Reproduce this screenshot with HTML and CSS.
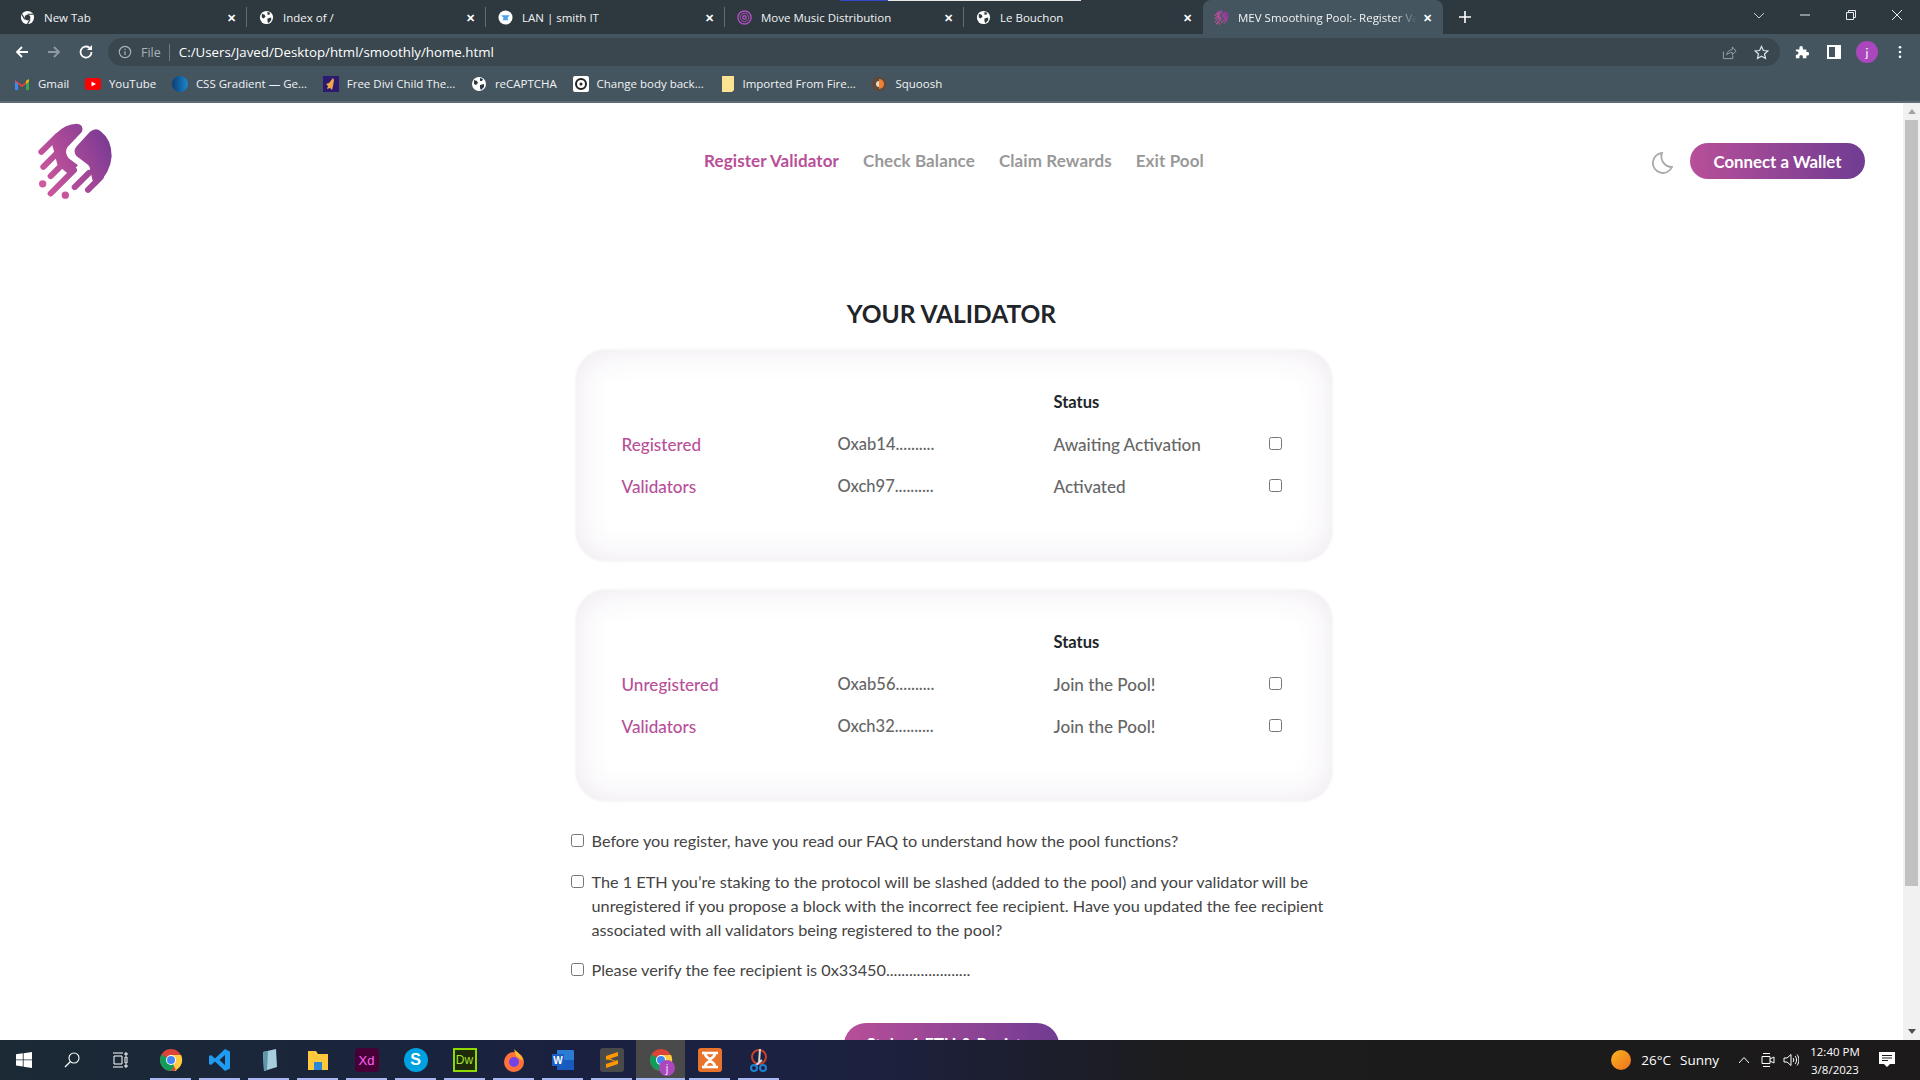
FILE: index.html
```html
<!DOCTYPE html>
<html lang="en">
  <head>
    <meta charset="UTF-8" />
    <title>MEV Smoothing Pool:- Register Validator</title>
    <link rel="stylesheet" href="styles.css">
  </head>
  <body>
    <svg class="defs" width="0" height="0">
      <defs>
        <linearGradient id="brand" gradientUnits="userSpaceOnUse" x1="130" y1="220" x2="330" y2="120">
          <stop offset="0" stop-color="#c9549b" />
          <stop offset="1" stop-color="#7a3a94" />
        </linearGradient>
        <symbol id="logo" viewBox="112 66 222 230">
          <g fill="url(#brand)">
            <path d="M228 68Q250 70 244 92L200 138Q190 155 205 172L232 192L205 220L190 208L170 190L160 150L150 115L165 98Q195 68 228 68Z" />
            <path d="M268 92Q285 78 300 90Q333 115 333 165Q330 215 285 255L275 235L268 205Q268 195 258 188L228 165Q215 150 228 135Z" />
          </g>
          <g fill="none" stroke="url(#brand)" stroke-width="18" stroke-linecap="round">
            <path d="M170 105L122 152" />
            <path d="M175 150L128 197" />
            <path d="M195 180L150 225" />
            <path d="M220 207L150 277" />
            <path d="M265 215L222 258" />
            <path d="M300 228L262 266" />
          </g>
          <circle cx="126" cy="248" r="11" fill="#d0589d" />
          <circle cx="194" cy="282" r="11" fill="#c9549b" />
        </symbol>
        <symbol id="globe" viewBox="0 0 16 16">
          <circle cx="8" cy="8" r="7" fill="#fff" />
          <path d="M3 4l3 1 1 2-2 2-2-1zM9 2l3 1-1 2-2 0zM9 9l4-1 0 3-3 3-1-2z" fill="#2e393f" />
        </symbol>
        <symbol id="chrome" viewBox="0 0 48 48">
          <circle cx="24" cy="24" r="22" fill="#db4437" />
          <path d="M24 24L5 13A22 22 0 0 0 24 46L35 27z" fill="#0f9d58" />
          <path d="M24 24L35 46L24 46A22 22 0 0 0 44 14L24 14z" fill="#ffcd40" />
          <circle cx="24" cy="24" r="10" fill="#fff" />
          <circle cx="24" cy="24" r="8" fill="#4285f4" />
        </symbol>
      </defs>
    </svg>

    <div class="tabs">
      <div class="tab"><svg class="fav" viewBox="0 0 16 16"><circle cx="8" cy="8" r="7" fill="#fff" /><circle cx="8" cy="8" r="3" fill="#2e393f" /><path d="M8 4.5h6M5 10L2 4.5M10.8 10L8 15" stroke="#2e393f" stroke-width="1.2" /></svg><span class="tab-title">New Tab</span><span class="tab-x">✕</span></div>
      <div class="tab"><svg class="fav"><use href="#globe" /></svg><span class="tab-title">Index of /</span><span class="tab-x">✕</span></div>
      <div class="tab"><svg class="fav" viewBox="0 0 16 16"><circle cx="8" cy="8" r="7.5" fill="#fff" /><path d="M3.5 5.5h9L10 8.5 11 11H5l1-2.5z" fill="#4aa3e8" /></svg><span class="tab-title">LAN | smith IT</span><span class="tab-x">✕</span></div>
      <div class="tab"><svg class="fav" viewBox="0 0 16 16" fill="none" stroke="#b04fc0"><circle cx="8" cy="8" r="7" stroke-width="1.5" /><circle cx="8" cy="8" r="4.5" /><circle cx="8" cy="8" r="1.8" stroke-width="1.5" /></svg><span class="tab-title">Move Music Distribution</span><span class="tab-x">✕</span></div>
      <div class="tab tab-last"><svg class="fav"><use href="#globe" /></svg><span class="tab-title">Le Bouchon</span><span class="tab-x">✕</span></div>
      <div class="tab tab-active"><svg class="fav"><use href="#logo" /></svg><span class="tab-title tab-fade">MEV Smoothing Pool:- Register Validator</span><span class="tab-x">✕</span></div>
      <svg class="new-tab" viewBox="0 0 12 12"><path d="M6 0v12M0 6h12" stroke="#fff" stroke-width="1.6" /></svg>
      <div class="win-controls">
        <svg viewBox="0 0 12 12"><path d="M1 4l5 5 5-5" fill="none" stroke="#c8ced2" /></svg>
        <svg viewBox="0 0 12 12"><path d="M1 6h10" stroke="#e8ebed" /></svg>
        <svg viewBox="0 0 12 12"><path d="M1.5 3.5h7v7h-7zM3.5 3.5v-2h7v7h-2" fill="none" stroke="#e8ebed" /></svg>
        <svg viewBox="0 0 12 12"><path d="M1 1l10 10M11 1L1 11" stroke="#e8ebed" /></svg>
      </div>
      <div class="load-bar"></div>
    </div>

    <div class="toolbar">
      <svg class="tool-icon" viewBox="0 0 16 16"><path d="M14 8H3M8 3L3 8l5 5" fill="none" stroke="#fff" stroke-width="1.8" /></svg>
      <svg class="tool-icon" viewBox="0 0 16 16"><path d="M2 8h11M8 3l5 5-5 5" fill="none" stroke="#8e9aa1" stroke-width="1.8" /></svg>
      <svg class="tool-icon" viewBox="0 0 16 16"><path d="M13.5 8A5.5 5.5 0 1 1 11.5 3.800" fill="none" stroke="#fff" stroke-width="1.8" /><path d="M14 1v5H9z" fill="#fff" /></svg>
      <div class="omnibox">
        <svg class="info" viewBox="0 0 16 16"><circle cx="8" cy="8" r="6.5" fill="none" stroke="#aab3b8" stroke-width="1.3" /><path d="M8 7v4.500M8 4.300v1.400" stroke="#aab3b8" stroke-width="1.4" /></svg>
        <span class="scheme">File</span>
        <span class="url">C:/Users/Javed/Desktop/html/smoothly/home.html</span>
        <svg class="omni-share" viewBox="0 0 16 16"><path d="M1.5 7v7.500h10V11M5 10.500C5.500 7 8 5 11 5V2l4 4.500-4 4V8C8.500 8 6.500 8.800 5 10.500z" fill="none" stroke="#9aa5ab" /></svg>
        <svg class="omni-star" viewBox="0 0 16 16"><path d="M8 1.500l2 4.400 4.800.5-3.600 3.200 1 4.700L8 11.900l-4.200 2.400 1-4.700L1.200 6.400 6 5.900z" fill="none" stroke="#dfe3e5" stroke-width="1.3" /></svg>
      </div>
      <svg class="ext" viewBox="0 0 16 16"><path d="M1 5h4V3a2 2 0 0 1 4 0v2h4v3h1.500a2 2 0 0 1 0 4H13v3H9v-1.500a2 2 0 0 0-4 0V15H1v-4h1a2 2 0 0 0 0-4H1z" fill="#fff" /></svg>
      <svg class="ext" viewBox="0 0 14 14"><rect width="14" height="14" fill="#fff" /><rect x="2" y="2" width="6" height="10" fill="#44555f" /></svg>
      <span class="avatar">j</span>
      <svg class="dots" viewBox="0 0 4 16"><circle cx="2" cy="2.500" r="1.500" fill="#fff" /><circle cx="2" cy="8" r="1.500" fill="#fff" /><circle cx="2" cy="13.500" r="1.500" fill="#fff" /></svg>
    </div>

    <div class="bookmarks">
      <a class="mark"><svg viewBox="0 0 16 12"><path d="M1 12V2l7 5 7-5v10h-3V6L8 9 4 6v6z" fill="#ea4335" /><path d="M1 12h3V6L1 3z" fill="#4285f4" /><path d="M12 12h3V3l-3 3z" fill="#34a853" /><path d="M12 3l3-2v2l-3 3z" fill="#fbbc04" /></svg>Gmail</a>
      <a class="mark"><svg viewBox="0 0 16 16"><rect y="2" width="16" height="12" rx="3" fill="#f00" /><path d="M6.500 5.500v5L11 8z" fill="#fff" /></svg>YouTube</a>
      <a class="mark"><svg viewBox="0 0 16 16"><defs><linearGradient id="cssg"><stop offset="0" stop-color="#0d3c78" /><stop offset="1" stop-color="#1b87c9" /></linearGradient></defs><circle cx="8" cy="8" r="8" fill="url(#cssg)" /></svg>CSS Gradient — Ge...</a>
      <a class="mark"><svg viewBox="0 0 16 16"><rect width="16" height="16" fill="#2b1a6e" /><path d="M10 2L6 7 3 8l2 2-1 3 3-1 2 2 1-4 1-6z" fill="#f0a848" /></svg>Free Divi Child The...</a>
      <a class="mark"><svg><use href="#globe" /></svg>reCAPTCHA</a>
      <a class="mark"><svg viewBox="0 0 16 16"><rect width="16" height="16" rx="2" fill="#fff" /><circle cx="8" cy="8" r="5" fill="none" stroke="#222" stroke-width="2" /><circle cx="8" cy="8" r="1.500" fill="#222" /></svg>Change body back...</a>
      <a class="mark mark-folder"><svg viewBox="0 0 12 16"><path d="M0 0h12v14l-2 2H0z" fill="#fde293" /></svg>Imported From Fire...</a>
      <a class="mark"><svg viewBox="0 0 16 16"><circle cx="8" cy="8" r="7.500" fill="#5c4a40" /><path d="M8 3a5 5 0 0 1 0 10z" fill="#f08030" /><path d="M8 5a3 3 0 0 0 0 6z" fill="#f4d8c0" /></svg>Squoosh</a>
    </div>

    <div class="viewport">
      <main class="page">
        <header class="site-header">
          <svg class="logo"><use href="#logo" /></svg>
          <nav class="nav">
            <a class="nav-link nav-current">Register Validator</a>
            <a class="nav-link">Check Balance</a>
            <a class="nav-link">Claim Rewards</a>
            <a class="nav-link">Exit Pool</a>
          </nav>
          <div class="header-actions">
            <svg class="moon" viewBox="0 0 22 22"><path d="M11 1a10 10 0 1 0 10 14A10.500 10.500 0 0 1 11 1z" fill="none" stroke="#a9a9a9" stroke-width="1.8" /></svg>
            <button class="btn btn-wallet">Connect a Wallet</button>
          </div>
        </header>

        <section class="content">
          <h1 class="title">YOUR VALIDATOR</h1>

          <div class="card">
            <div class="row"><span></span><span></span><span class="status-head">Status</span></div>
            <div class="row">
              <span class="kind">Registered</span><span class="addr">Oxab14..........</span><span>Awaiting Activation</span>
              <input type="checkbox" />
            </div>
            <div class="row">
              <span class="kind">Validators</span><span class="addr">Oxch97..........</span><span>Activated</span>
              <input type="checkbox" />
            </div>
          </div>

          <div class="card">
            <div class="row"><span></span><span></span><span class="status-head">Status</span></div>
            <div class="row">
              <span class="kind">Unregistered</span><span class="addr">Oxab56..........</span><span>Join the Pool!</span>
              <input type="checkbox" />
            </div>
            <div class="row">
              <span class="kind">Validators</span><span class="addr">Oxch32..........</span><span>Join the Pool!</span>
              <input type="checkbox" />
            </div>
          </div>

          <div class="terms">
            <label class="term"><input type="checkbox" /><span>Before you register, have you read our FAQ to understand how the pool functions?</span></label>
            <label class="term"><input type="checkbox" /><span>The 1 ETH you’re staking to the protocol will be slashed (added to the pool) and your validator will be unregistered if you propose a block with the incorrect fee recipient. Have you updated the fee recipient associated with all validators being registered to the pool?</span></label>
            <label class="term"><input type="checkbox" /><span>Please verify the fee recipient is 0x33450......................</span></label>
          </div>

          <div class="stake-wrap"><button class="btn btn-stake">Stake 1 ETH &amp; Register</button></div>
        </section>
      </main>
      <div class="scrollbar">
        <span class="arrow arrow-up"></span>
        <span class="thumb"></span>
        <span class="arrow arrow-down"></span>
      </div>
    </div>

    <footer class="taskbar">
      <div class="sys-icon"><svg viewBox="0 0 16 16"><path d="M0 2.300l6.800-1v6.200H0zM7.600 1.200L16 0v7.500H7.600zM0 8.300h6.800v6.300l-6.800-1zM7.600 8.300H16V16l-8.400-1.200z" fill="#fff" /></svg></div>
      <div class="sys-icon"><svg viewBox="0 0 16 16"><circle cx="10" cy="6" r="5" fill="none" stroke="#fff" stroke-width="1.1" /><path d="M6.500 9.500L1 15" stroke="#fff" stroke-width="1.3" /></svg></div>
      <div class="sys-icon sys-last"><svg viewBox="0 0 16 16"><path d="M1 1h10M1 15h10M2 4h8v8H2zM13 1h2v2h-2zM13 5h2v6h-2zM13 13h2v2h-2z" fill="none" stroke="#fff" /></svg></div>

      <div class="app app-on"><svg><use href="#chrome" /></svg></div>
      <div class="app app-on"><svg viewBox="0 0 24 24"><path d="M17 1l5 2.500v17L17 23 7 13.500 3 17l-2-1V8l2-1 4 3.500zM17 7l-5.500 5 5.500 5z" fill="#1f9cf0" /></svg></div>
      <div class="app app-on"><svg viewBox="0 0 24 24"><path d="M6 4l13-3 1 18-13 4z" fill="#a8cfe0" /><path d="M6 4l5-1-1 19-3 1z" fill="#5f97a8" /></svg></div>
      <div class="app app-on"><svg viewBox="0 0 24 24"><path d="M2 3h8l2 3h10v16H2z" fill="#ffc83d" /><rect x="8" y="14" width="8" height="8" fill="#2b88d8" /></svg></div>
      <div class="app app-on"><span class="app-tile tile-xd">Xd</span></div>
      <div class="app app-on"><span class="app-tile tile-skype">S</span></div>
      <div class="app app-on"><span class="app-tile tile-dw">Dw</span></div>
      <div class="app app-on"><svg viewBox="0 0 24 24"><circle cx="12" cy="14" r="10" fill="#ff7139" /><path d="M12 1c3 3 8 6 9 12L14 8z" fill="#ffbd2e" /><circle cx="12" cy="14" r="5" fill="#7542e5" /></svg></div>
      <div class="app app-on"><svg viewBox="0 0 24 24"><rect x="6" y="2" width="17" height="20" rx="1" fill="#2b7cd3" /><rect x="6" y="12" width="17" height="10" fill="#185abd" /><rect x="1" y="6" width="12" height="12" fill="#1a5fc4" /><text x="7" y="15.500" class="word-w">W</text></svg></div>
      <div class="app app-on"><svg viewBox="0 0 24 24"><rect width="24" height="24" rx="3" fill="#4a4a4a" /><path d="M18 4v4L6 12V8zM18 12v4L6 20v-4zM6 9l12 5-12-3z" fill="#ff9800" /></svg></div>
      <div class="app app-on app-active"><svg><use href="#chrome" /></svg><span class="app-badge">j</span></div>
      <div class="app app-on"><svg viewBox="0 0 24 24"><rect width="24" height="24" rx="3" fill="#e8742c" /><path d="M4 5h16M4 19h16M7 5c0 5 5 5 5 7s-5 2-5 7M17 5c0 5-5 5-5 7s5 2 5 7" fill="none" stroke="#fff" stroke-width="2.6" /></svg></div>
      <div class="app app-on"><svg viewBox="0 0 24 24" fill="none"><circle cx="12" cy="9" r="7" stroke="#c8402a" stroke-width="2" /><path d="M13 1l-1 14M8 18l7-6" stroke="#d8d8d8" stroke-width="2" /><circle cx="7" cy="20" r="3" stroke="#1f7fd0" stroke-width="2" /><circle cx="16" cy="20" r="3" stroke="#1f7fd0" stroke-width="2" /></svg></div>

      <div class="tray">
        <span class="sun"></span>
        <span class="weather">26°C</span>
        <span class="weather">Sunny</span>
        <svg class="tray-caret" viewBox="0 0 12 8"><path d="M1 7l5-5.500L11 7" fill="none" stroke="#fff" /></svg>
        <svg class="tray-icon" viewBox="0 0 16 16"><path d="M3 1.500h7M3 14.500h7M2 4.500h8v7H2zM10 7l4-2v6l-4-2" fill="none" stroke="#fff" /></svg>
        <svg class="tray-icon" viewBox="0 0 16 16"><path d="M1 6h3l4-3.500v11L4 10H1zM10 6c1 1 1 3 0 4M12 4c2 2 2 6 0 8M14 2.500c2.500 3 2.500 8 0 11" fill="none" stroke="#fff" /></svg>
        <div class="clock"><span>12:40 PM</span><span>3/8/2023</span></div>
        <svg class="notify" viewBox="0 0 16 16"><path d="M0 0h16v12h-5l-3 3-3-3H0z" fill="#fff" /><path d="M3 3.500h10M3 6h10M3 8.500h6" stroke="#1c1c1c" /></svg>
      </div>
    </footer>
  </body>
</html>
```

FILE: styles.css
```css
* {
  box-sizing: border-box;
}
html,
body {
  margin: 0;
  height: 1080px;
  overflow: hidden;
}
body {
  display: flex;
  flex-direction: column;
  font-family: "Lato", "Open Sans", sans-serif;
  background-color: #fff;
}
.defs {
  position: absolute;
}

/* browser chrome */
.tabs {
  position: relative;
  display: flex;
  align-items: center;
  flex: none;
  height: 34px;
  padding-left: 8px;
  background-color: #2e393f;
  font-family: "Open Sans", sans-serif;
  font-size: 11.5px;
  color: #f1f3f4;
}
.tab {
  display: flex;
  align-items: center;
  width: 239px;
  height: 100%;
  padding: 0 11px 0 12px;
  position: relative;
}
.tab::after {
  content: "";
  position: absolute;
  right: 0;
  top: 7px;
  bottom: 7px;
  width: 1px;
  background-color: #626d73;
}
.tab-last::after,
.tab-active::after {
  display: none;
}
.tab-active {
  width: 240px;
  background-color: #44555f;
  border-radius: 8px 8px 0 0;
  padding-left: 11px;
}
.fav {
  flex: none;
  width: 15px;
  height: 15px;
  margin-right: 9px;
}
.tab-title {
  flex: 1;
  overflow: hidden;
  white-space: nowrap;
}
.tab-fade {
  -webkit-mask-image: linear-gradient(90deg, #000 88%, transparent);
  mask-image: linear-gradient(90deg, #000 88%, transparent);
}
.tab-x {
  flex: none;
  margin-left: 6px;
  font-size: 11px;
  font-weight: 700;
  color: #fff;
}
.new-tab {
  width: 12px;
  height: 12px;
  margin-left: 16px;
}
.win-controls {
  display: flex;
  gap: 34px;
  align-items: center;
  margin-left: auto;
  padding-right: 17px;
  margin-top: -4px;
}
.win-controls svg {
  width: 12px;
  height: 12px;
}
.load-bar {
  position: absolute;
  left: 840px;
  top: 0;
  width: 241px;
  height: 1px;
  background: linear-gradient(90deg, #3347c8 20%, #e8e8e8 20%);
}
.toolbar {
  display: flex;
  align-items: center;
  flex: none;
  height: 36px;
  padding: 0 0 0 14px;
  background-color: #44555f;
}
.tool-icon {
  width: 16px;
  height: 16px;
  margin-right: 16px;
}
.omnibox {
  display: flex;
  align-items: center;
  width: 1672px;
  height: 28px;
  margin-left: -2px;
  padding-left: 10px;
  border-radius: 14px;
  background-color: #3a474f;
  font-family: "Open Sans", sans-serif;
  font-size: 13.3px;
  color: #fff;
}
.info {
  width: 14px;
  height: 14px;
  margin-right: 9px;
}
.scheme {
  padding-right: 8px;
  margin-right: 9px;
  border-right: 1px solid #6d7a81;
  color: #aab3b8;
  font-size: 12.5px;
}
.url {
  flex: 1;
}
.omni-share {
  width: 15px;
  height: 15px;
  margin-right: 17px;
}
.omni-star {
  width: 15px;
  height: 15px;
  margin-right: 11px;
}
.ext {
  width: 14px;
  height: 14px;
  margin-left: 15px;
  margin-right: 3px;
}
.avatar {
  display: flex;
  align-items: center;
  justify-content: center;
  width: 22px;
  height: 22px;
  margin-left: 12px;
  border-radius: 50%;
  background-color: #ab47bc;
  font-size: 12px;
  color: #fff;
}
.dots {
  width: 4px;
  height: 14px;
  margin-left: 20px;
}
.bookmarks {
  display: flex;
  align-items: center;
  gap: 15.7px;
  flex: none;
  height: 33px;
  padding: 0 0 4px 14px;
  background-color: #44555f;
  border-bottom: 2px solid #5c6b74;
  font-family: "Open Sans", sans-serif;
  font-size: 11.5px;
  color: #f1f3f4;
}
.mark {
  display: flex;
  align-items: center;
  gap: 8px;
  white-space: nowrap;
}
.mark svg {
  width: 16px;
  height: 16px;
}
.mark-folder {
  margin-left: 3px;
}
.mark-folder svg {
  width: 12px;
}

/* page */
.viewport {
  display: flex;
  flex: 1;
  min-height: 0;
}
.page {
  flex: 1;
  min-width: 0;
  overflow: hidden;
  font-size: 16px;
  color: #666;
}
.site-header {
  display: flex;
  align-items: flex-start;
  height: 96px;
  padding: 20px 38px 0;
}
.logo {
  flex: none;
  width: 74px;
  height: 77px;
}
.nav {
  display: flex;
  gap: 24px;
  margin-left: 592px;
  margin-top: 27px;
  font-size: 17px;
  letter-spacing: 0.1px;
  font-weight: 700;
  color: #999;
}
.nav-current {
  color: #b84f99;
}
.header-actions {
  display: flex;
  align-items: center;
  gap: 17px;
  margin-left: auto;
  margin-top: 20px;
}
.moon {
  width: 22px;
  height: 22px;
  margin-top: 3px;
}
.btn {
  border: none;
  font-family: inherit;
  font-weight: 700;
  color: #fff;
  background: linear-gradient(90deg, #b84f99, #703c92);
  cursor: pointer;
}
.btn-wallet {
  width: 175px;
  height: 36px;
  border-radius: 18px;
  font-size: 16.8px;
}
.content {
  width: 760px;
  margin: 99px auto 0;
}
.title {
  margin: 0 0 20px;
  font-size: 24.5px;
  line-height: 32px;
  font-weight: 700;
  text-align: center;
  color: #212529;
}
.card {
  margin: 0 0 29px 4px;
  padding: 40px 0 63px 46px;
  border-radius: 30px;
  background-color: #fff;
  box-shadow: inset 0 0 34px rgba(110, 60, 120, 0.12), 0 0 3px rgba(110, 60, 120, 0.1);
}
.row {
  display: grid;
  grid-template-columns: 216px 216px 216px 13px;
  align-items: center;
  height: 24px;
  margin-bottom: 18px;
  font-size: 17.1px;
  font-weight: 500;
}
.row:last-child {
  margin-bottom: 0;
}
.row input {
  width: 13px;
  height: 13px;
  margin: 0 0 2px -1px;
}
.addr {
  font-size: 16.5px;
}
.status-head {
  font-size: 16.5px;
  font-weight: 700;
  color: #212529;
}
.kind {
  color: #b84f99;
}
.terms {
  display: flex;
  flex-direction: column;
  gap: 16.5px;
  margin-top: -1px;
  color: #444;
}
.term {
  display: flex;
  gap: 8px;
  line-height: 24px;
  font-size: 16.25px;
}
.term input {
  flex: none;
  width: 13px;
  height: 13px;
  margin: 5px 0 0 -1px;
}
.stake-wrap {
  display: flex;
  justify-content: center;
  margin-top: 41px;
}
.btn-stake {
  width: 215px;
  height: 44px;
  border-radius: 22px;
  font-size: 16.5px;
}

/* scrollbar */
.scrollbar {
  display: flex;
  flex-direction: column;
  align-items: center;
  flex: none;
  width: 17px;
  background-color: #f1f1f1;
}
.arrow {
  flex: none;
  width: 0;
  height: 0;
  margin: 6px 0;
  border-left: 4px solid transparent;
  border-right: 4px solid transparent;
}
.arrow-up {
  border-bottom: 5px solid #a3a3a3;
}
.arrow-down {
  margin-top: auto;
  border-top: 5px solid #505050;
}
.thumb {
  flex: none;
  width: 13px;
  height: 766px;
  background-color: #c1c1c1;
}

/* windows taskbar */
.taskbar {
  display: flex;
  align-items: center;
  flex: none;
  height: 40px;
  background: linear-gradient(90deg, #1b2a35 0, #1a2140 30%, #1c2140 45%, #1c1c1c 62%, #1c1a1a 100%);
  font-family: "Open Sans", sans-serif;
  color: #fff;
}
.sys-icon {
  display: flex;
  align-items: center;
  justify-content: center;
  width: 48px;
  height: 100%;
}
.sys-icon svg {
  width: 16px;
  height: 16px;
}
.sys-last {
  margin-right: 2px;
}
.app {
  position: relative;
  display: flex;
  align-items: center;
  justify-content: center;
  width: 49px;
  height: 100%;
}
.app svg {
  width: 24px;
  height: 24px;
}
.app-on::after {
  content: "";
  position: absolute;
  left: 4px;
  right: 4px;
  bottom: 0;
  height: 2px;
  background-color: #a9b8f2;
}
.app-active {
  background-color: #4a4a4a;
}
.app-active::after {
  left: 0;
  right: 0;
}
.app-tile {
  display: flex;
  align-items: center;
  justify-content: center;
  width: 24px;
  height: 24px;
  font-family: "Liberation Sans", sans-serif;
  font-size: 13px;
  line-height: 1;
}
.tile-xd {
  border-radius: 4px;
  background-color: #470137;
  color: #ff61f6;
}
.tile-skype {
  border-radius: 50%;
  background-color: #00a1e0;
  font-size: 16px;
  font-weight: 700;
}
.tile-dw {
  border: 2px solid #8fdb00;
  background-color: #1d2b0a;
  color: #a6e22e;
  font-size: 12px;
}
.word-w {
  font-family: "Liberation Sans", sans-serif;
  font-size: 10px;
  font-weight: 700;
  fill: #fff;
  text-anchor: middle;
}
.app-badge {
  position: absolute;
  right: 10px;
  bottom: 4px;
  display: flex;
  align-items: center;
  justify-content: center;
  width: 16px;
  height: 16px;
  border-radius: 50%;
  background-color: #ab47bc;
  font-size: 10px;
}
.tray {
  display: flex;
  align-items: center;
  height: 100%;
  margin-left: auto;
  font-size: 13.5px;
}
.sun {
  width: 20px;
  height: 20px;
  margin-right: 10px;
  border-radius: 50%;
  background: linear-gradient(135deg, #f7b51f, #f0701e);
}
.weather {
  margin-right: 9px;
}
.tray-caret {
  width: 12px;
  height: 8px;
  margin: 0 10px;
}
.tray-icon {
  width: 16px;
  height: 16px;
  margin-right: 7px;
}
.clock {
  display: flex;
  flex-direction: column;
  align-items: center;
  gap: 1px;
  width: 52px;
  margin-left: 3px;
  font-size: 11.5px;
  line-height: 17px;
}
.notify {
  width: 16px;
  height: 16px;
  margin: 0 25px 0 18px;
}
```
